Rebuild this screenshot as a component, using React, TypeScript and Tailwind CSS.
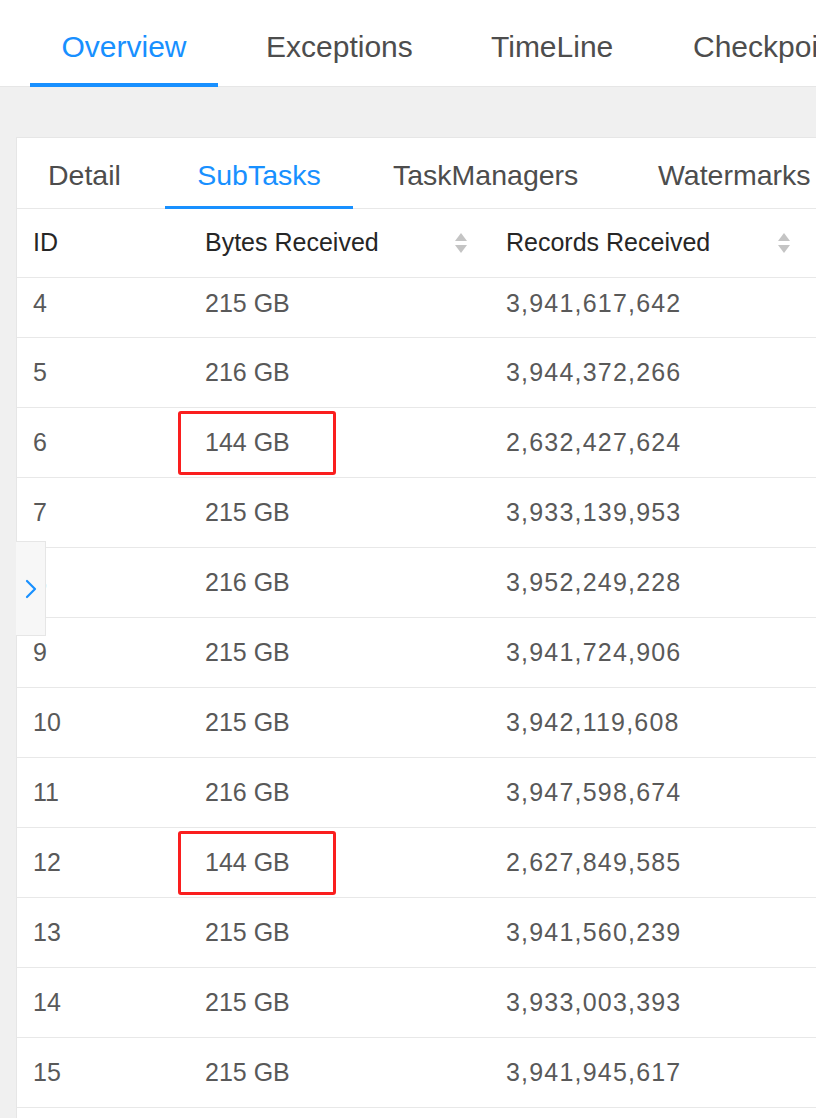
import React from 'react';

const rows: { id: string; bytes: string; records: string; flagged?: boolean }[] = [
  { id: '4', bytes: '215 GB', records: '3,941,617,642' },
  { id: '5', bytes: '216 GB', records: '3,944,372,266' },
  { id: '6', bytes: '144 GB', records: '2,632,427,624', flagged: true },
  { id: '7', bytes: '215 GB', records: '3,933,139,953' },
  { id: '8', bytes: '216 GB', records: '3,952,249,228' },
  { id: '9', bytes: '215 GB', records: '3,941,724,906' },
  { id: '10', bytes: '215 GB', records: '3,942,119,608' },
  { id: '11', bytes: '216 GB', records: '3,947,598,674' },
  { id: '12', bytes: '144 GB', records: '2,627,849,585', flagged: true },
  { id: '13', bytes: '215 GB', records: '3,941,560,239' },
  { id: '14', bytes: '215 GB', records: '3,933,003,393' },
  { id: '15', bytes: '215 GB', records: '3,941,945,617' },
];

const SortIcon = () => (
  <svg width="14" height="24" viewBox="0 0 14 24" className="shrink-0">
    <path d="M7 2 L13 10 L1 10 Z" fill="#c4c4c4" />
    <path d="M1 14 L13 14 L7 22 Z" fill="#c4c4c4" />
  </svg>
);

export default function App() {
  return (
    <div
      className="w-[816px] h-[1118px] overflow-hidden bg-[#f0f0f0] relative"
      style={{ fontFamily: '"Liberation Sans", Arial, sans-serif' }}
    >
      {/* top tabs */}
      <div className="h-[87px] bg-white border-b border-[#e6e6e6] flex items-center pt-[6px] text-[30px] text-[#4d4d4d] whitespace-nowrap">
        <div className="relative shrink-0 w-[188px] h-full ml-[30px] flex items-center justify-center text-[#1890ff]">
          Overview
          <div className="absolute left-0 right-0 bottom-[-1px] h-[4px] bg-[#1890ff]" />
        </div>
        <div className="shrink-0 w-[225px] pl-[48px]">Exceptions</div>
        <div className="shrink-0 w-[202px] pl-[48px]">TimeLine</div>
        <div className="shrink-0 pl-[48px]">Checkpoints</div>
      </div>

      {/* card */}
      <div className="ml-[16px] mt-[50px] bg-white border-l border-t border-[#e6e6e6]">
        {/* sub tabs */}
        <div className="h-[71px] flex items-center pt-[5px] border-b border-[#e8e8e8] text-[28.5px] text-[#4d4d4d] whitespace-nowrap">
          <div className="shrink-0 w-[148px] pl-[31px]">Detail</div>
          <div className="relative shrink-0 w-[188px] h-full flex items-center justify-center text-[#1890ff]">
            SubTasks
            <div className="absolute left-0 right-0 bottom-[-1px] h-[3px] bg-[#1890ff]" />
          </div>
          <div className="shrink-0 w-[305px] pl-[40px]">TaskManagers</div>
          <div className="shrink-0">Watermarks</div>
        </div>

        {/* header */}
        <div className="h-[69px] flex items-center border-b border-[#e8e8e8] text-[25px] text-[#262626] font-medium whitespace-nowrap">
          <div className="w-[172px] pl-[16px]">ID</div>
          <div className="w-[301px] pl-[16px] pr-[22px] flex items-center justify-between">
            <span>Bytes Received</span>
            <SortIcon />
          </div>
          <div className="w-[326px] pl-[16px] pr-[25px] flex items-center justify-between">
            <span>Records Received</span>
            <SortIcon />
          </div>
        </div>

        {/* rows */}
        {rows.map((r, i) => (
          <div
            key={r.id}
            className={`${i === 0 ? 'h-[60px] items-start pt-[7px]' : 'h-[70px] items-center'} flex border-b border-[#e8e8e8] text-[25px] text-[#595959] whitespace-nowrap`}
          >
            <div className="w-[172px] pl-[16px]">{r.id}</div>
            <div className="w-[301px] pl-[16px]">
              {r.flagged ? (
                <span className="inline-block relative">
                  {r.bytes}
                  <span className="absolute left-[-27px] right-[-46px] top-[-13px] bottom-[-14px] border-[3px] border-[#fa1e1e] rounded-[3px]" />
                </span>
              ) : (
                r.bytes
              )}
            </div>
            <div className="pl-[16px] tracking-[1.2px]">{r.records}</div>
          </div>
        ))}
        <div className="h-[20px]" />
      </div>

      {/* collapse handle */}
      <div className="absolute left-[16px] top-[541px] w-[30px] h-[95px] bg-[#f7f7f7] border border-[#e6e6e6] border-l-0 flex items-center justify-center">
        <svg width="16" height="26" viewBox="0 0 16 26">
          <path d="M4 5 L12 13 L4 21" fill="none" stroke="#1890ff" strokeWidth="2.2" strokeLinecap="round" strokeLinejoin="round" />
        </svg>
      </div>
    </div>
  );
}
